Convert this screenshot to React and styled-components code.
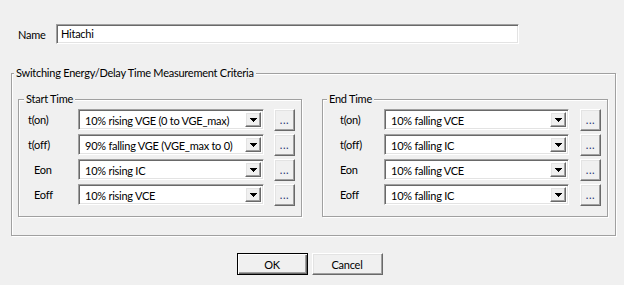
import React from 'react';
import styled, { createGlobalStyle } from 'styled-components';

const GlobalStyle = createGlobalStyle`
    html, body {
        margin: 0;
        padding: 0;
        background: #f0f0f0;
    }
    body {
        font-family: Lato, "Noto Sans", "Liberation Sans", sans-serif;
        font-size: 11px;
        letter-spacing: -0.25px;
        color: #000;
    }
`;

const Dialog = styled.div`
    width: 624px;
    height: 285px;
    box-sizing: border-box;
    padding: 24px 8px 0 11px;
    display: flex;
    flex-direction: column;
`;

const NameRow = styled.div`
    display: flex;
    align-items: center;
    height: 20px;
    padding-left: 7px;
`;

const NameLabel = styled.label`
    width: 38px;
`;

const sunken = `
    border: 1px solid;
    border-color: #a0a0a0 #ffffff #ffffff #a0a0a0;
    box-shadow: inset 1px 1px 0 #696969, inset -1px -1px 0 #e3e3e3;
    background: #fff;
    box-sizing: border-box;
`;

const raised = `
    border: 1px solid;
    border-color: #ffffff #696969 #696969 #ffffff;
    box-shadow: inset -1px -1px 0 #a0a0a0, inset 1px 1px 0 #e3e3e3;
    background: #f0f0f0;
    box-sizing: border-box;
`;

const NameInput = styled.div`
    ${sunken}
    width: 463px;
    height: 20px;
    padding: 0 4px;
    line-height: 18px;
`;

const GroupBox = styled.fieldset`
    margin: ${p => p.$margin || '0'};
    padding: 0;
    width: ${p => p.$width}px;
    box-sizing: border-box;
    border: 1px solid #a0a0a0;
    box-shadow: inset 1px 1px 0 #fff, 1px 1px 0 #fff;
    min-width: 0;
`;

const Legend = styled.legend`
    margin-left: ${p => p.$indent}px;
    padding: 0 2px;
    line-height: 16px;
    background: #f0f0f0;
`;

const GroupBody = styled.div`
    padding: ${p => p.$padding};
`;

const GroupRow = styled.div`
    display: flex;
    gap: 20px;
`;

const Rows = styled.div`
    display: flex;
    flex-direction: column;
    gap: 4px;
`;

const Row = styled.div`
    display: grid;
    grid-template-columns: ${p => p.$labelWidth}px ${p => p.$comboWidth}px 21px;
    column-gap: ${p => p.$gap}px;
    align-items: center;
    height: 21px;
`;

const RowLabel = styled.span`
    padding-left: ${p => p.$indent || 0}px;
`;

const Combo = styled.div`
    ${sunken}
    height: 21px;
    display: flex;
    align-items: stretch;
    padding: 2px;
`;

const ComboValue = styled.div`
    flex: 1;
    padding-left: 4px;
    line-height: 17px;
    white-space: nowrap;
    overflow: hidden;
`;

const ArrowButton = styled.div`
    ${raised}
    width: 16px;
    display: flex;
    align-items: center;
    justify-content: center;
`;

const SmallButton = styled.div`
    ${raised}
    width: 21px;
    height: 22px;
    margin-top: 1px;
    display: flex;
    align-items: flex-end;
    justify-content: center;
    padding-bottom: 5px;
    line-height: 10px;
    color: #2a3470;
    letter-spacing: 0.5px;
`;

const Footer = styled.div`
    display: flex;
    justify-content: center;
    gap: 4px;
    margin-top: 17px;
    padding-right: 8px;
`;

const PushButton = styled.div`
    ${raised}
    width: 71px;
    height: 22px;
    display: flex;
    align-items: center;
    justify-content: center;
    ${p => p.$default && `
        border: 1px solid #000;
        box-shadow: inset 1px 1px 0 #fff, inset -1px -1px 0 #696969, inset -2px -2px 0 #a0a0a0;
    `}
`;

const Arrow = () => (
    <svg width="7" height="4" viewBox="0 0 7 4" shapeRendering="crispEdges">
        <rect x="0" y="0" width="7" height="1" fill="#000" />
        <rect x="1" y="1" width="5" height="1" fill="#000" />
        <rect x="2" y="2" width="3" height="1" fill="#000" />
        <rect x="3" y="3" width="1" height="1" fill="#000" />
    </svg>
);

const startRows = [
    { label: 't(on)', value: '10% rising VGE (0 to VGE_max)', indent: 0 },
    { label: 't(off)', value: '90% falling VGE (VGE_max to 0)', indent: 0 },
    { label: 'Eon', value: '10% rising IC', indent: 6 },
    { label: 'Eoff', value: '10% rising VCE', indent: 6 },
];

const endRows = [
    { label: 't(on)', value: '10% falling VCE' },
    { label: 't(off)', value: '10% falling IC' },
    { label: 'Eon', value: '10% falling VCE' },
    { label: 'Eoff', value: '10% falling IC' },
];

const TimeGroup = ({ title, rows, width, padLeft, legendIndent, labelWidth, comboWidth, gap }) => (
    <GroupBox $width={width}>
        <Legend $indent={legendIndent}>{title}</Legend>
        <GroupBody $padding={`1px 6px 12px ${padLeft}px`}>
            <Rows>
                {rows.map((r) => (
                    <Row key={r.label} $labelWidth={labelWidth} $comboWidth={comboWidth} $gap={gap}>
                        <RowLabel $indent={r.indent}>{r.label}</RowLabel>
                        <Combo>
                            <ComboValue>{r.value}</ComboValue>
                            <ArrowButton><Arrow /></ArrowButton>
                        </Combo>
                        <SmallButton>...</SmallButton>
                    </Row>
                ))}
            </Rows>
        </GroupBody>
    </GroupBox>
);

const App = () => {
    return (
        <>
            <GlobalStyle />
            <Dialog>
                <NameRow>
                    <NameLabel>Name</NameLabel>
                    <NameInput>Hitachi</NameInput>
                </NameRow>
                <GroupBox $width={605} $margin="21px 0 0 0">
                    <Legend $indent={2}>Switching Energy/Delay Time Measurement Criteria</Legend>
                    <GroupBody $padding="10px 0 18px 6px">
                        <GroupRow>
                            <TimeGroup
                                title="Start Time"
                                rows={startRows}
                                width={284}
                                padLeft={9}
                                legendIndent={5}
                                labelWidth={40}
                                comboWidth={186}
                                gap={10}
                            />
                            <TimeGroup
                                title="End Time"
                                rows={endRows}
                                width={286}
                                padLeft={17}
                                legendIndent={4}
                                labelWidth={33}
                                comboWidth={185}
                                gap={11}
                            />
                        </GroupRow>
                    </GroupBody>
                </GroupBox>
                <Footer>
                    <PushButton $default>OK</PushButton>
                    <PushButton>Cancel</PushButton>
                </Footer>
            </Dialog>
        </>
    );
};

export default App;
